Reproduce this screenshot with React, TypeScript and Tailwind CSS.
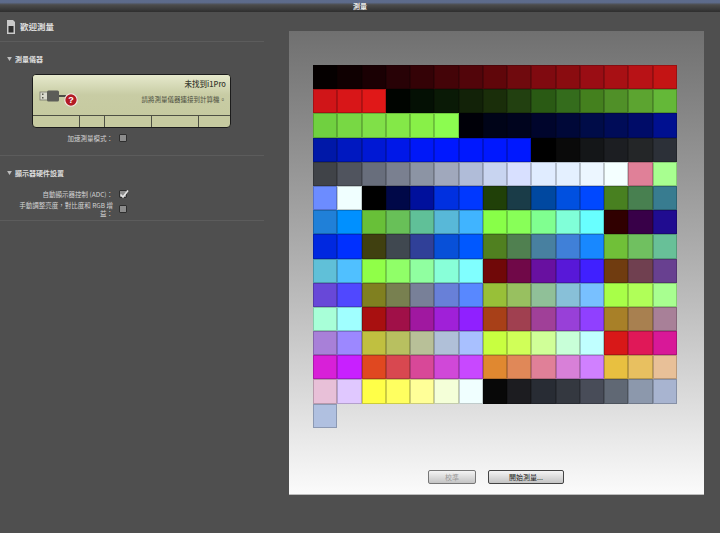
const font = "[font-family:'Noto_Sans_CJK_TC','Liberation_Sans',sans-serif]";

const patchRows: string[][] = [
  ["#050000", "#0f0001", "#1a0003", "#280206", "#340206", "#440408", "#52050a", "#60060a", "#700a0e", "#800a10", "#8a0c10", "#9a0d14", "#a81014", "#b81216", "#c41414"],
  ["#d01518", "#d81618", "#e01818", "#000400", "#041004", "#0a1a06", "#122208", "#1a2e0a", "#224010", "#2a5a14", "#346c1c", "#44801e", "#509028", "#5ca430", "#64b838"],
  ["#70d040", "#78d844", "#80e048", "#84e848", "#88f048", "#8cfc50", "#000008", "#000418", "#00041e", "#00052c", "#000838", "#000c48", "#000c58", "#000c68", "#001090"],
  ["#0018a8", "#0018c0", "#0018d4", "#0018e8", "#0018f8", "#0018ff", "#0018ff", "#0018ff", "#0018ff", "#000000", "#0a0a0a", "#141618", "#1c1e22", "#242628", "#2c3038"],
  ["#404348", "#50545e", "#686e7c", "#7a8090", "#8c94a4", "#a0a8bc", "#b0bcd8", "#c8d4f0", "#d8e0ff", "#e0ecff", "#e4f0ff", "#ecf6ff", "#f4ffff", "#e08098", "#a8ff90"],
  ["#6c8cff", "#f0ffff", "#000000", "#000848", "#00109c", "#0030e0", "#0038ff", "#204008", "#1a3c48", "#0048a0", "#0050e0", "#0048ff", "#488020", "#488050", "#387c90"],
  ["#2080d8", "#0090ff", "#68c038", "#68c058", "#60c098", "#58b8d8", "#40b4ff", "#88ff48", "#88ff58", "#80ff90", "#80ffd8", "#68ffff", "#300000", "#380048", "#200c90"],
  ["#0028e0", "#0030ff", "#404010", "#404850", "#304098", "#0850d8", "#0058ff", "#508020", "#508050", "#4880a0", "#4080d8", "#1888ff", "#70c038", "#70c060", "#68c098"],
  ["#60c0d8", "#50c0ff", "#90ff48", "#90ff68", "#90ffa0", "#88ffd8", "#80ffff", "#700808", "#700848", "#6810a0", "#5818d8", "#4020ff", "#703c10", "#704050", "#684090"],
  ["#6848d8", "#5048ff", "#808020", "#788050", "#788098", "#6880d8", "#5888ff", "#98c038", "#98c060", "#90c098", "#88c0d8", "#78c0ff", "#a8ff48", "#b0ff58", "#a8ff90"],
  ["#a8ffd8", "#a0ffff", "#a81010", "#a01048", "#a018a0", "#a020d8", "#9020ff", "#a84018", "#a04050", "#a04098", "#9840d8", "#9040ff", "#a88028", "#a88050", "#a88098"],
  ["#a880d8", "#9c88ff", "#c0c040", "#b8c060", "#b8c098", "#b0c0d8", "#a8c0ff", "#c8ff40", "#d0ff58", "#d0ff98", "#c8ffd8", "#c0ffff", "#d81818", "#e01858", "#d81898"],
  ["#d820d8", "#c820ff", "#e04820", "#d84850", "#d84898", "#d048d8", "#c848ff", "#e08830", "#e08858", "#e08098", "#d880d8", "#d080ff", "#e8c040", "#e8c060", "#e8c098"],
  ["#e8c0d8", "#e0c8ff", "#ffff48", "#ffff60", "#ffff98", "#f4ffd8", "#f0ffff", "#080808", "#1c1c20", "#282c34", "#343840", "#484c58", "#606874", "#8c98ac", "#a8b4d0"],
  ["#b0c0e0"],
];

function Checkbox({ checked = false }: { checked?: boolean }) {
  return (
    <span className="relative block h-[8px] w-[8px] shrink-0 rounded-[1px] border border-[#2e2e2e] bg-[#8c8c8c]">
      {checked ? (
        <svg viewBox="0 0 10 10" className="absolute -top-[2px] -left-[1px] h-[10px] w-[10px]">
          <path d="M1.5 5.5 L4 8 L9 1.5" fill="none" stroke="#e4e4e4" strokeWidth="1.6" />
        </svg>
      ) : null}
    </span>
  );
}

function SectionTitle({ children }: { children: string }) {
  return (
    <div className="flex h-[12px] items-center gap-[3px] pl-[7px] text-[7px] font-bold text-[#dcdcdc]">
      <svg viewBox="0 0 6 5" className="h-[4px] w-[5px]">
        <path d="M0 0 H6 L3 5 Z" fill="#bdbdbd" />
      </svg>
      <span>{children}</span>
    </div>
  );
}

function OptionRow({ label, checked, className }: { label: string; checked?: boolean; className?: string }) {
  return (
    <div className={`flex items-center ${className ?? ""}`}>
      <span className="w-[113px] pl-[16px] text-right text-[6.5px] leading-[8px] text-[#d4d4d4]">{label}</span>
      <span className="ml-[6px]">
        <Checkbox checked={checked} />
      </span>
    </div>
  );
}

function DeviceCard() {
  return (
    <div className="mt-[9px] ml-[32px] flex h-[54px] w-[199px] flex-col overflow-hidden rounded-[4px] border border-[#1c1c1c] bg-[#c6caa0]">
      <div className="relative flex-1 bg-gradient-to-b from-[#e6e9cc] via-[#c8cca4] to-[#c6caa0] pr-[4px] text-right text-[#3a3c30]">
        <p className="pt-[3px] text-[7.5px] leading-[12px] font-medium">未找到i1Pro</p>
        <p className="mt-[4px] text-[6.5px] leading-[10px] text-[#4c4e40]">請將測量儀器連接到計算機。</p>
        <svg viewBox="0 0 46 24" className="absolute top-[14px] left-[6px] h-[24px] w-[46px]">
          <rect x="1" y="3" width="8" height="8" fill="#d8d8cc" stroke="#77786c" strokeWidth="0.8" />
          <rect x="3" y="4.5" width="1.5" height="1.5" fill="#55564c" />
          <rect x="3" y="8" width="1.5" height="1.5" fill="#55564c" />
          <rect x="8" y="1.5" width="12" height="11" rx="1.5" fill="#5c5d58" />
          <path d="M20 7 H27" stroke="#4c4d48" strokeWidth="1.8" />
          <circle cx="32" cy="11" r="6.2" fill="#b31b25" stroke="#f1efe8" strokeWidth="1.1" />
          <text x="32" y="14.2" textAnchor="middle" fontSize="9" fontWeight="700" fill="#ffffff" fontFamily="Liberation Sans">?</text>
        </svg>
      </div>
      <div className="flex h-[12px] border-t border-[#4e5044]">
        <div className="w-[47px] border-r border-[#4e5044]" />
        <div className="w-[25px] border-r border-[#4e5044]" />
        <div className="w-[47px] border-r border-[#4e5044]" />
        <div className="w-[47px] border-r border-[#4e5044]" />
        <div className="flex-1" />
      </div>
    </div>
  );
}

function Sidebar() {
  return (
    <aside className="w-[289px] shrink-0">
      <div className="flex h-[30px] w-[264px] items-center gap-[5px] border-b border-[#5c5c5c] pl-[7px]">
        <svg viewBox="0 0 8 14" className="h-[14px] w-[8px]">
          <path d="M0 0 H6 L8 2 V14 H0 Z" fill="#c9c9c9" />
          <rect x="1.5" y="6" width="5" height="6.5" fill="#2e2e2e" />
        </svg>
        <h1 className="text-[8.5px] font-bold text-[#dedede]">歡迎測量</h1>
      </div>
      <div className="mt-[11px]">
        <SectionTitle>測量儀器</SectionTitle>
      </div>
      <DeviceCard />
      <OptionRow label="加速測量模式：" className="mt-[6px]" />
      <div className="mt-[13px] h-px w-[264px] bg-[#5c5c5c]" />
      <div className="mt-[11px]">
        <SectionTitle>顯示器硬件設置</SectionTitle>
      </div>
      <OptionRow label="自動顯示器控制 (ADC)：" checked className="mt-[11px]" />
      <OptionRow label="手動調整亮度，對比度和 RGB 增益：" className="mt-[3px]" />
      <div className="mt-[3px] h-px w-[264px] bg-[#5c5c5c]" />
    </aside>
  );
}

function PatchGrid() {
  return (
    <div className="ml-[24px] grid grid-cols-[repeat(15,24.27px)] auto-rows-[24.2px]">
      {patchRows.flat().map((color, index) => (
        <div key={index} className="border border-black/20" style={{ backgroundColor: color }} />
      ))}
    </div>
  );
}

export default function App() {
  return (
    <div className={`flex h-[533px] w-[720px] flex-col overflow-hidden bg-[#4f4f4f] ${font}`}>
      <header className="flex h-[12px] shrink-0 items-center justify-center bg-gradient-to-b from-[#5d6b8b] from-20% via-[#4c4c4c] via-40% to-[#2f2f2f] pt-[1px] text-[7px] font-bold text-[#e8e8e8]">
        測量
      </header>
      <div className="flex flex-1">
        <Sidebar />
        <main className="mt-[19px] mb-[38px] flex w-[415px] flex-col border-b border-[#bdbdbd] bg-gradient-to-b from-[#707070] via-[#b0b0b0] via-50% to-[#fbfbfb] pt-[34px] pr-[1px] pb-[10px]">
          <PatchGrid />
          <div className="mt-auto flex justify-center gap-[12px]">
            <button type="button" className="h-[14px] w-[48px] rounded-[2px] border border-[#777] bg-gradient-to-b from-[#f4f4f4] to-[#c4c4c4] text-[7px] leading-none text-[#9a9a9a]">
              校準
            </button>
            <button type="button" className="h-[14px] w-[76px] rounded-[2px] border border-[#444] bg-gradient-to-b from-[#f4f4f4] to-[#c4c4c4] text-[7px] leading-none text-[#222]">
              開始測量...
            </button>
          </div>
        </main>
      </div>
    </div>
  );
}
